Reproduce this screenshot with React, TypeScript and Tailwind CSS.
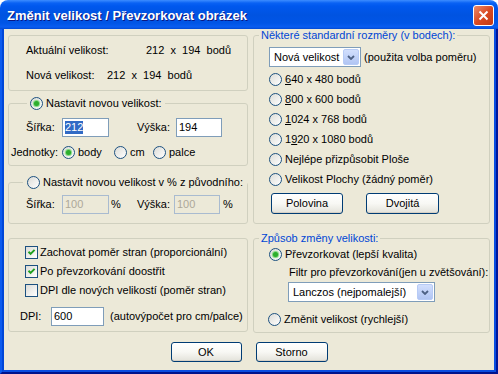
import React from 'react';

type Kids = { children?: React.ReactNode; className?: string };

function Radio({ checked = false }: { checked?: boolean }) {
  return (
    <span className="flex h-[13px] w-[13px] shrink-0 items-center justify-center rounded-full border border-[#1C5180] bg-gradient-to-br from-[#DCDCD7] to-white">
      {checked && <span className="h-[5px] w-[5px] rounded-full bg-[#2DAE2D] shadow-[0_0_1px_1px_#7AD67A]" />}
    </span>
  );
}

function Check({ checked = false }: { checked?: boolean }) {
  return (
    <span className="flex h-[13px] w-[13px] shrink-0 items-center justify-center border border-[#1C5180] bg-gradient-to-br from-[#DCDCD7] to-white">
      {checked && (
        <svg width="9" height="9" viewBox="0 0 9 9">
          <path d="M1.5 3.8 L3.6 5.9 L7.6 1.9" stroke="#21A121" strokeWidth="2" fill="none" />
        </svg>
      )}
    </span>
  );
}

function Btn({ children, className = '' }: Kids) {
  return (
    <div
      className={`flex items-center justify-center rounded-[3px] border border-[#003C74] bg-gradient-to-b from-white via-[#F8F8F4] to-[#E3E2DA] shadow-[inset_0_-1px_0_#D6D0C5] ${className}`}
    >
      {children}
    </div>
  );
}

function TextBox({
  value,
  className = '',
  selected = false,
  disabled = false,
}: {
  value: string;
  className?: string;
  selected?: boolean;
  disabled?: boolean;
}) {
  return (
    <div
      className={`flex shrink-0 items-center border pl-[2px] ${
        disabled ? 'border-[#A9BBD0] bg-[#ECE9D8] text-[#ACA899]' : 'border-[#7F9DB9] bg-white'
      } ${className}`}
    >
      {selected ? <span className="bg-[#316AC5] text-white">{value}</span> : value}
    </div>
  );
}

function Combo({ value, className = '' }: { value: string; className?: string }) {
  return (
    <div className={`flex shrink-0 items-stretch border border-[#7F9DB9] bg-white p-[1px] ${className}`}>
      <span className="flex flex-1 items-center pl-[3px]">{value}</span>
      <span className="flex w-[16px] items-center justify-center rounded-[2px] border border-[#B7CBF6] bg-gradient-to-b from-[#D2DFFD] to-[#B1C5F3]">
        <svg width="8" height="5" viewBox="0 0 8 5">
          <path d="M1 1 L4 4 L7 1" stroke="#4D6185" strokeWidth="1.8" fill="none" />
        </svg>
      </span>
    </div>
  );
}

function Opt({ label, checked = false, className = '' }: { label: React.ReactNode; checked?: boolean; className?: string }) {
  return (
    <div className={`flex h-[13px] items-center gap-[3px] ${className}`}>
      <Radio checked={checked} />
      <span className="whitespace-nowrap">{label}</span>
    </div>
  );
}

const groupBorder = 'rounded-[3px] border border-[#D0D0BF]';

export default function App() {
  return (
    <div className="h-[374px] w-[498px] overflow-hidden bg-white font-['Liberation_Sans',Arial,sans-serif] text-[11px] leading-[13px] text-black">
      <div className="flex h-full flex-col overflow-hidden rounded-t-[8px] bg-[linear-gradient(to_bottom,#3D8DFF_0px,#0A62F4_3px,#0058EE_6px,#0053E1_15px,#0055E6_23px,#0A5DF0_27px,#0049D3_29px)]">
        {/* title bar */}
        <div className="flex h-[29px] shrink-0 items-start justify-between pl-[7px] pr-[4px]">
          <span className="pt-[8px] text-[13px] font-bold leading-[15px] text-white [text-shadow:1px_1px_#0A1883]">
            Změnit velikost / Převzorkovat obrázek
          </span>
          <div className="mt-[5px] flex h-[21px] w-[21px] items-center justify-center rounded-[3px] border border-white bg-gradient-to-br from-[#EC8A68] via-[#DA4A22] to-[#C23A12]">
            <svg width="11" height="11" viewBox="0 0 11 11">
              <path d="M1.5 1.5 L9.5 9.5 M9.5 1.5 L1.5 9.5" stroke="white" strokeWidth="2" />
            </svg>
          </div>
        </div>

        {/* frame */}
        <div className="flex flex-1 flex-col border-x-2 border-b-2 border-l-[#0C5BEF] border-r-[#00169A] border-b-[#00138C]">
          <div className="flex flex-1 flex-col border-x-2 border-b-2 border-l-[#0047D8] border-r-[#0A4DE0] border-b-[#0A4DE0] bg-[#ECE9D8]">
            <div className="flex gap-[5px] px-[4px]">
              {/* left column */}
              <div className="flex w-[240px] shrink-0 flex-col pt-[6px]">
                <div className={`flex h-[56px] flex-col pl-[17px] ${groupBorder}`}>
                  <div className="mt-[8px] flex h-[13px]">
                    <span className="w-[120px] shrink-0">Aktuální velikost:</span>
                    <span className="whitespace-pre">212  x  194  bodů</span>
                  </div>
                  <div className="mt-[12px] flex h-[13px]">
                    <span className="w-[81px] shrink-0">Nová velikost:</span>
                    <span className="whitespace-pre">212  x  194  bodů</span>
                  </div>
                </div>

                <fieldset className={`mt-[5px] h-[70px] ${groupBorder}`}>
                  <legend className="ml-[18px] px-[3px]">
                    <Opt checked label="Nastavit novou velikost:" className="h-[14px]" />
                  </legend>
                  <div className="mt-[8px] flex h-[19px] items-center pl-[17px]">
                    <span className="w-[36px] shrink-0">Šířka:</span>
                    <TextBox value="212" selected className="h-[19px] w-[47px]" />
                    <span className="ml-[28px] w-[39px] shrink-0">Výška:</span>
                    <TextBox value="194" className="h-[19px] w-[46px]" />
                  </div>
                  <div className="mt-[9px] flex h-[13px] items-center pl-[2px]">
                    <span className="w-[51px] shrink-0">Jednotky:</span>
                    <Opt checked label="body" className="w-[52px]" />
                    <Opt label="cm" className="w-[39px]" />
                    <Opt label="palce" />
                  </div>
                </fieldset>

                <fieldset className={`mt-[9px] h-[49px] ${groupBorder}`}>
                  <legend className="ml-[14px] px-[4px]">
                    <Opt label="Nastavit novou velikost v % z původního:" className="h-[14px]" />
                  </legend>
                  <div className="mt-[6px] flex h-[19px] items-center pl-[17px]">
                    <span className="w-[36px] shrink-0">Šířka:</span>
                    <TextBox value="100" disabled className="h-[19px] w-[47px]" />
                    <span className="ml-[2px] w-[26px] shrink-0">%</span>
                    <span className="w-[37px] shrink-0">Výška:</span>
                    <TextBox value="100" disabled className="h-[19px] w-[46px]" />
                    <span className="ml-[3px]">%</span>
                  </div>
                </fieldset>

                <div className={`mt-[14px] flex h-[94px] flex-col ${groupBorder}`}>
                  <div className="mt-[7px] flex h-[13px] items-center gap-[2px] pl-[16px]">
                    <Check checked />
                    <span>Zachovat poměr stran (proporcionální)</span>
                  </div>
                  <div className="mt-[6px] flex h-[13px] items-center gap-[2px] pl-[16px]">
                    <Check checked />
                    <span>Po převzorkování doostřit</span>
                  </div>
                  <div className="mt-[6px] flex h-[13px] items-center gap-[2px] pl-[16px]">
                    <Check />
                    <span>DPI dle nových velikostí (poměr stran)</span>
                  </div>
                  <div className="mt-[10px] flex h-[19px] items-center pl-[11px]">
                    <span className="w-[31px] shrink-0">DPI:</span>
                    <TextBox value="600" className="h-[19px] w-[53px]" />
                    <span className="ml-[6px]">(autovýpočet pro cm/palce)</span>
                  </div>
                </div>
              </div>

              {/* right column */}
              <div className="flex w-[237px] shrink-0 flex-col">
                <fieldset className={`h-[195px] ${groupBorder}`}>
                  <legend className="ml-[5px] px-[2px] leading-[12px] text-[#0046D5]">
                    Některé standardní rozměry (v bodech):
                  </legend>
                  <div className="mt-[6px] flex h-[20px] items-center pl-[15px]">
                    <Combo value="Nová velikost" className="h-[20px] w-[92px]" />
                    <span className="ml-[3px] whitespace-nowrap">(použita volba poměru)</span>
                  </div>
                  <div className="flex flex-col gap-[7px] pl-[15px] pt-[6px]">
                    <Opt label={<><span className="underline">6</span>40 x 480 bodů</>} />
                    <Opt label={<><span className="underline">8</span>00 x 600 bodů</>} />
                    <Opt label={<><span className="underline">1</span>024 x 768 bodů</>} />
                    <Opt label={<>1<span className="underline">9</span>20 x 1080 bodů</>} />
                    <Opt label="Nejlépe přizpůsobit Ploše" />
                    <Opt label="Velikost Plochy (žádný poměr)" />
                  </div>
                  <div className="mt-[7px] flex pl-[17px]">
                    <Btn className="h-[21px] w-[72px]">Polovina</Btn>
                    <Btn className="ml-[23px] h-[21px] w-[73px]">Dvojitá</Btn>
                  </div>
                </fieldset>

                <fieldset className={`mt-[8px] h-[101px] ${groupBorder}`}>
                  <legend className="ml-[5px] px-[2px] leading-[12px] text-[#0046D5]">Způsob změny velikosti:</legend>
                  <Opt checked label="Převzorkovat (lepší kvalita)" className="mt-[4px] pl-[15px]" />
                  <div className="mt-[5px] h-[13px] whitespace-nowrap pl-[35px]">
                    Filtr pro převzorkování(jen u zvětšování):
                  </div>
                  <Combo value="Lanczos (nejpomalejší)" className="ml-[34px] mt-[3px] h-[20px] w-[147px]" />
                  <Opt label="Změnit velikost (rychlejší)" className="mt-[11px] gap-[2px] pl-[14px]" />
                </fieldset>
              </div>
            </div>

            <div className="mt-[9px] flex justify-center gap-[14px]">
              <Btn className="h-[20px] w-[71px]">OK</Btn>
              <Btn className="h-[20px] w-[72px]">Storno</Btn>
            </div>
          </div>
        </div>
      </div>
    </div>
  );
}
